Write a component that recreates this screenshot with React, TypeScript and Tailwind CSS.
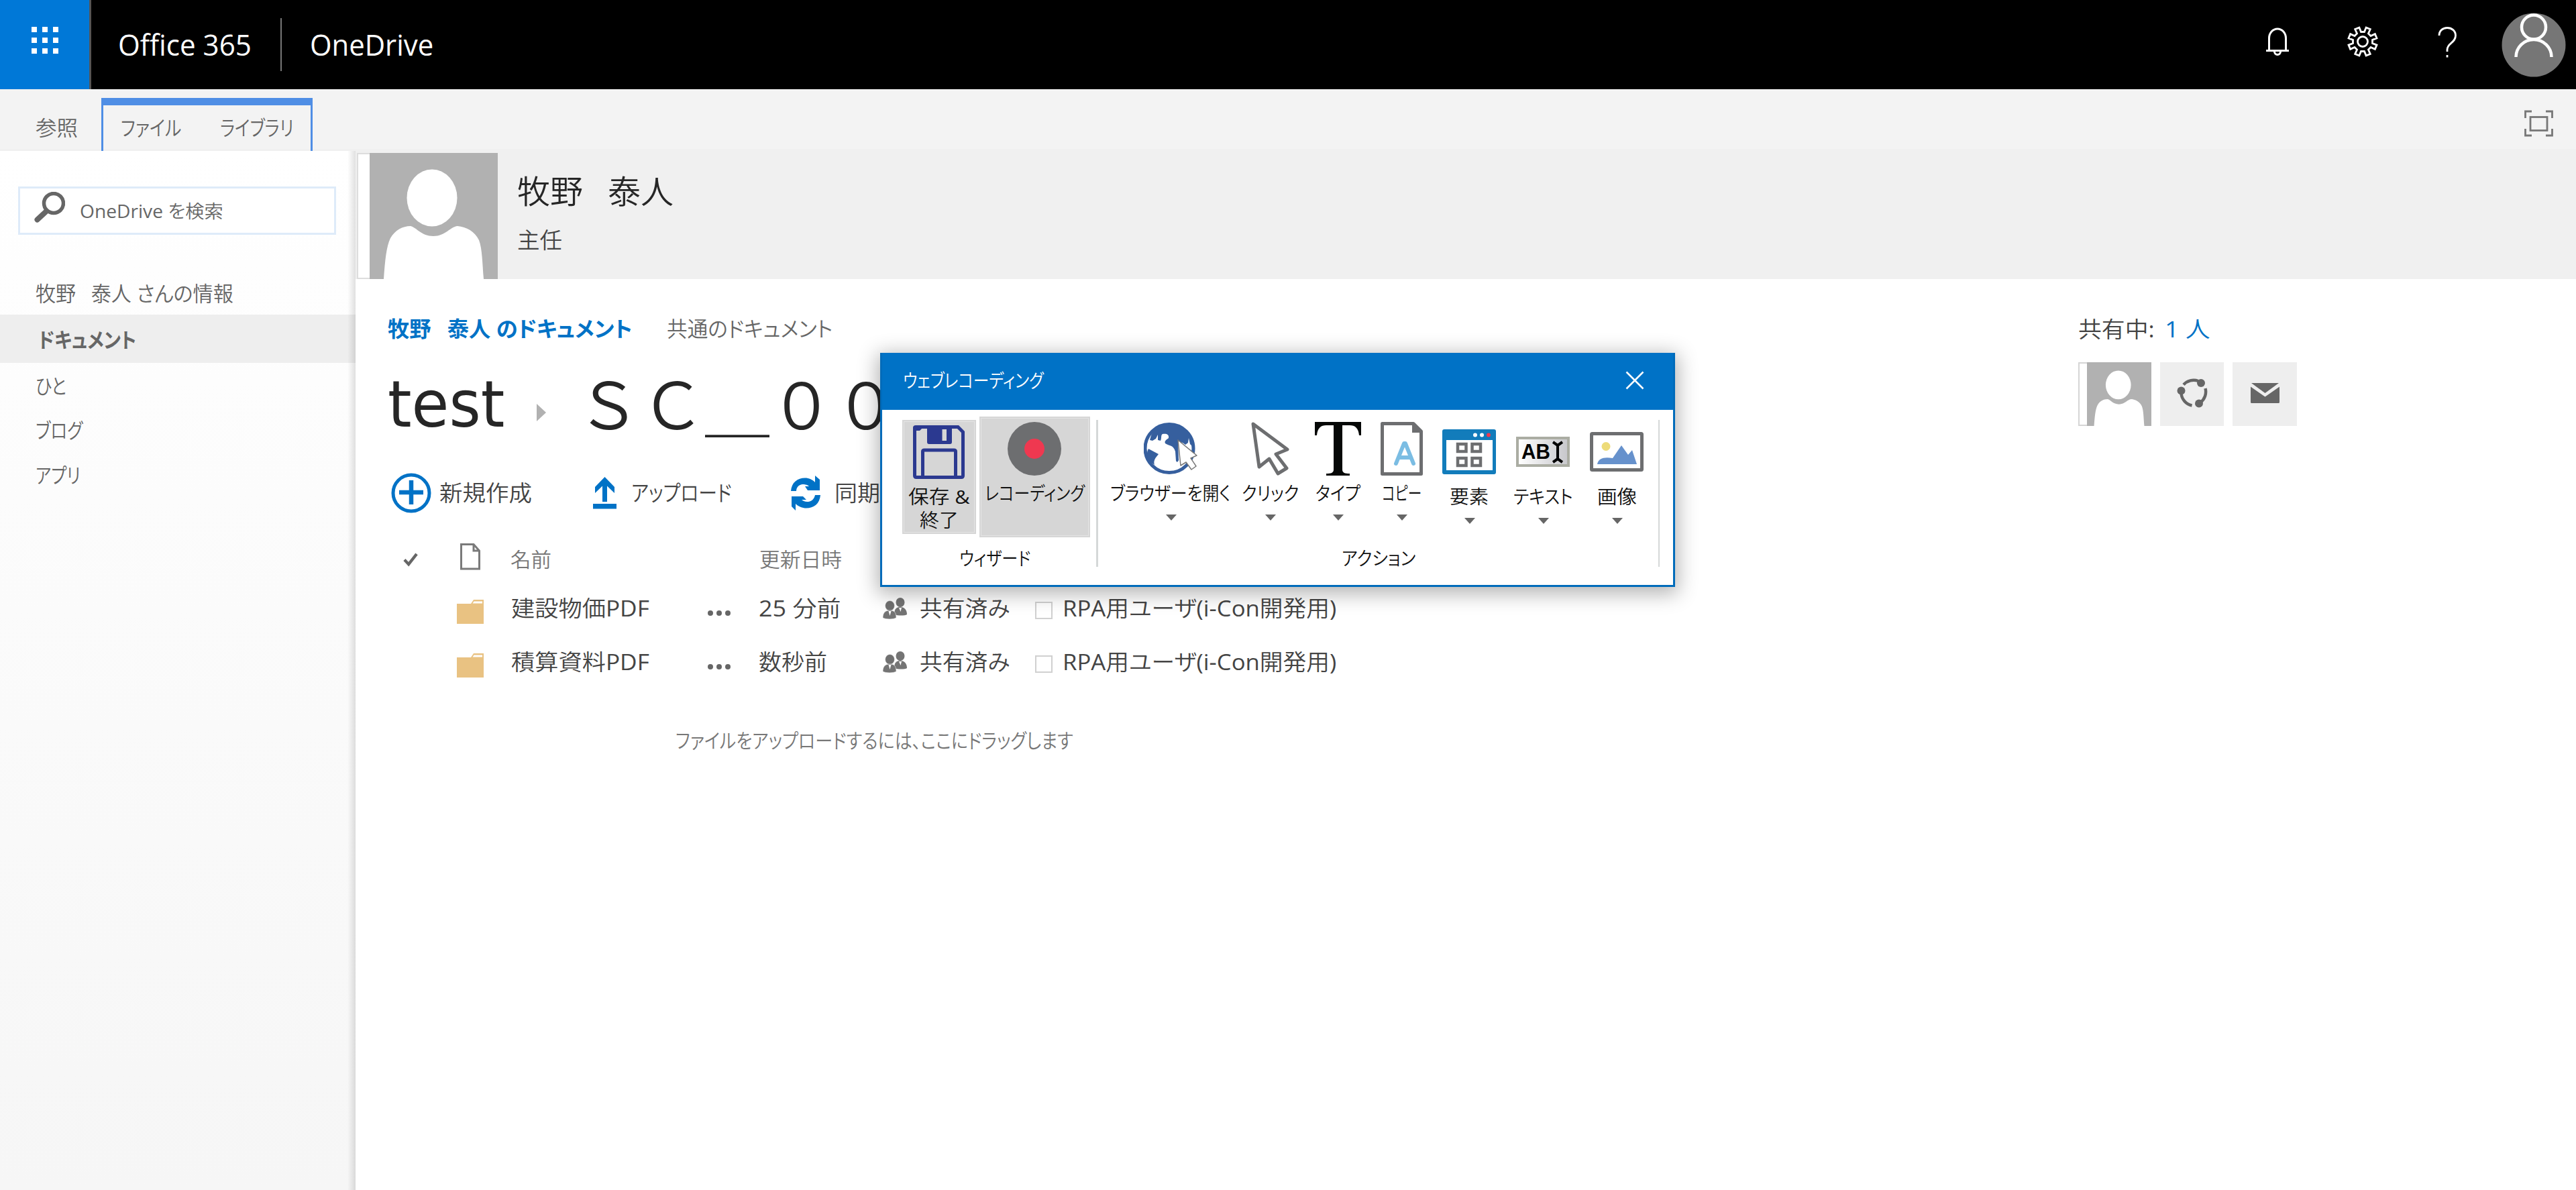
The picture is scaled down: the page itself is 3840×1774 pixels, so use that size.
import { useLayoutEffect, useRef, type ReactNode } from "react";

// Single-line label condensed or expanded to the width of its box.
// Latin runs are set one weight heavier than the Japanese text around them.
function Fit({ className, children }: { className: string; children: ReactNode }) {
  const outer = useRef<HTMLSpanElement>(null);
  const inner = useRef<HTMLSpanElement>(null);
  useLayoutEffect(() => {
    if (!outer.current || !inner.current) return;
    inner.current.style.transform = `scaleX(${outer.current.clientWidth / inner.current.offsetWidth})`;
  }, []);
  const content = typeof children === "string"
    ? children.split(/([!-~]+)/).map((part, i) => (i % 2 ? <span key={i} className="font-normal">{part}</span> : part))
    : children;
  return (
    <span ref={outer} className={`block shrink-0 whitespace-pre leading-none ${className}`}>
      <span ref={inner} className="inline-block origin-left">{content}</span>
    </span>
  );
}

// Owner's name with a tightened ideographic space.
function OwnerName() {
  return <>牧野<span className="tracking-[-0.25em]">　</span>泰人</>;
}

function Portrait({ className }: { className: string }) {
  return (
    <svg viewBox="0 0 191 188" preserveAspectRatio="none" className={className}>
      <rect width="191" height="188" fill="#b1b1b1" />
      <ellipse cx="93" cy="67" rx="37.500" ry="42.500" fill="#fff" />
      <path d="M21 188C23 160 25 139 31 127C38 115 49 109 61 109C70 111 77 124 95 124C113 124 120 110 131 109C144 110 157 117 163 130C168 143 168 165 170 188Z" fill="#fff" />
    </svg>
  );
}

function TopBar() {
  return (
    <header className="flex h-[133px] items-center bg-black text-[43px] text-white">
      <div className="flex h-full w-[136px] items-start justify-center border-r-[3px] border-[#555] bg-[#0078d7] pt-[40px]">
        <div className="grid grid-cols-3 gap-x-[8px] gap-y-[8px]">
          {Array.from({ length: 9 }, (_, i) => <i key={i} className="size-[8px] bg-white" />)}
        </div>
      </div>
      <Fit className="ml-[40px] w-[199px]">Office 365</Fit>
      <div className="ml-[43px] h-[79px] w-[2px] bg-[#777]" />
      <Fit className="ml-[42px] w-[184px]">OneDrive</Fit>
      <div className="ml-auto flex h-full">
        <svg viewBox="0 0 34 42" className="mt-[41px] h-[42px] w-[34px]" fill="none" stroke="#fff" strokeWidth="3">
          <path d="M4.500 34V16a12.500 14 0 0 1 25 0V34M0 34.500H34" />
          <path d="M12.500 36a4.500 4.500 0 0 0 9 0" />
        </svg>
        <svg viewBox="0 0 46 46" className="ml-[87px] mt-[39px] size-[46px]" fill="none" stroke="#fff" strokeWidth="2.800" strokeLinejoin="miter">
          <path d="M20.500 8.500L17.900 2L11.700 4.600L14.500 11L11 14.500L4.600 11.700L2 17.900L8.500 20.500V25.500L2 28.100L4.600 34.300L11 31.500L14.500 35L11.700 41.400L17.900 44L20.500 37.500H25.500L28.100 44L34.300 41.400L31.500 35L35 31.500L41.400 34.300L44 28.100L37.500 25.500V20.500L44 17.900L41.400 11.700L35 14.500L31.500 11L34.300 4.600L28.100 2L25.500 8.500Z" />
          <circle cx="23" cy="23" r="7.500" />
        </svg>
        <svg viewBox="0 0 28 46" className="ml-[89px] mt-[40px] h-[46px] w-[28px]" fill="none" stroke="#fff" strokeWidth="2.800">
          <path d="M2 13C2 6 7 1.500 14 1.500S26.500 6 26.500 13C26.500 24 14 24 14 34V37M14 42V45.500" />
        </svg>
        <svg viewBox="0 0 96 96" className="ml-[67px] mr-[15px] mt-[19px] size-[96px]">
          <circle cx="48" cy="48" r="47.500" fill="#767676" />
          <g fill="none" stroke="#fff" strokeWidth="4.500">
            <circle cx="48" cy="21.500" r="18" />
            <path d="M21.500 66a26.500 26 0 0 1 53 0" />
          </g>
        </svg>
      </div>
    </header>
  );
}

function Ribbon() {
  return (
    <div className="flex h-[92px] items-end border-b-[3px] border-[#f0f0f0] bg-[#f3f3f3] text-[31px] text-[#666]">
      <Fit className="mb-[16px] ml-[53px] w-[63px]">参照</Fit>
      <div className="-mb-[3px] ml-[35px] flex h-[79px] w-[315px] items-end border-x-[3px] border-t-[11px] border-[#4f8ee5] pb-[19px]">
        <Fit className="ml-[26px] w-[90px]">ファイル</Fit>
        <Fit className="ml-[58px] w-[110px]">ライブラリ</Fit>
      </div>
      <svg viewBox="0 0 43 40" className="mb-[18px] ml-auto mr-[34px] h-[40px] w-[43px]" fill="none" stroke="#777" strokeWidth="2.800">
        <path d="M1.500 12V2H11M32 2H41.500V12M41.500 28V38H32M11 38H1.500V28" />
        <rect x="9" y="10.500" width="25" height="20" />
      </svg>
    </div>
  );
}

function Sidebar() {
  return (
    <aside className="relative w-[530px] shrink-0 bg-linear-to-b from-white to-[#f6f6f6] text-[31px] text-[#666]">
      <div className="ml-[27px] mt-[53px] flex h-[72px] w-[474px] items-center border-[3px] border-[#deebf9] bg-white text-[27px]">
        <svg viewBox="0 0 46 46" className="-mt-[10px] ml-[21px] size-[46px]" fill="none" stroke="#666" strokeLinecap="round">
          <circle cx="29" cy="17" r="14.500" strokeWidth="5.500" />
          <path d="M18 29L4.500 41.500" strokeWidth="8" />
        </svg>
        <Fit className="ml-[22px] w-[214px]">OneDrive を検索</Fit>
      </div>
      <nav className="mt-[55px]">
        <div className="flex h-[64px] items-center pl-[53px]"><Fit className="w-[295px]"><OwnerName /> さんの情報</Fit></div>
        <div className="flex h-[72px] items-center bg-[#eee] pl-[57px] pt-[2px] font-bold"><Fit className="w-[146px]">ドキュメント</Fit></div>
        <div className="flex h-[68px] items-center pl-[53px]"><Fit className="w-[46px]">ひと</Fit></div>
        <div className="flex h-[64px] items-center pl-[53px]"><Fit className="w-[70px]">ブログ</Fit></div>
        <div className="flex h-[70px] items-center pl-[53px]"><Fit className="w-[67px]">アプリ</Fit></div>
      </nav>
      <div className="absolute inset-y-0 right-0 w-[12px] bg-linear-to-r from-transparent to-black/12" />
    </aside>
  );
}

function Profile() {
  return (
    <div className="flex h-[191px] bg-[#f0f0f0] pl-[2px] pt-[3px]">
      <div className="w-[19px] border-2 border-r-0 border-[#ddd] bg-white" />
      <Portrait className="h-[188px] w-[191px]" />
      <div className="ml-[29px]">
        <Fit className="mt-[33px] w-[233px] text-[48px] text-[#262626]"><OwnerName /></Fit>
        <Fit className="mt-[32px] w-[67px] text-[33px] text-[#444]">主任</Fit>
      </div>
    </div>
  );
}

function People() {
  return (
    <svg viewBox="0 0 36 32" className="h-[32px] w-[36px]" fill="#747474">
      <ellipse cx="26" cy="7" rx="6.500" ry="7" />
      <path d="M17 25C17 16 21 14 26 14S36 17 36 25C33 27 22 27 17 25Z" />
      <ellipse cx="10.500" cy="12" rx="7" ry="7.500" fill="#707070" stroke="#fff" strokeWidth=".5" />
      <path d="M0 30C0 22 4 19 10.500 19S20 22 20 30C16 32.500 4 32.500 0 30Z" stroke="#fff" strokeWidth=".5" />
      <path d="M8.500 20H12.500L10.500 27ZM24 15H28L26.500 21Z" fill="#fff" />
    </svg>
  );
}

function FileRow({ name, time, timeWidth }: { name: string; time: string; timeWidth: string }) {
  return (
    <div className="flex h-[80px] items-center text-[33px] text-[#444]">
      <svg viewBox="0 0 40 36" className="ml-[103px] mt-[9px] h-[36px] w-[40px]">
        <path d="M0 6H21L25 0H40V36H0Z" fill="#e9c282" />
        <path d="M25.500 2.500H38V5.500H23.500Z" fill="#fff" />
      </svg>
      <Fit className="-mt-[2px] ml-[41px] w-[206px]">{name}</Fit>
      <svg viewBox="0 0 36 10" className="ml-[86px] mt-[14px] h-[10px] w-[36px]" fill="#666">
        <circle cx="5" cy="5" r="4" /><circle cx="18" cy="5" r="4" /><circle cx="31" cy="5" r="4" />
      </svg>
      <div className="-mt-[2px] ml-[41px] w-[185px]"><Fit className={timeWidth}>{time}</Fit></div>
      <People />
      <Fit className="-mt-[2px] ml-[19px] w-[134px]">共有済み</Fit>
      <div className="ml-[38px] mt-[6px] size-[26px] border-2 border-[#d0d0d0]" />
      <Fit className="-mt-[2px] ml-[15px] w-[408px]">RPA用ユーザ(i-Con開発用)</Fit>
    </div>
  );
}

function Documents() {
  return (
    <section className="w-[2520px] pl-[48px]">
      <div className="flex h-[148px] items-center text-[32px] text-[#666]">
        <Fit className="w-[364px] font-bold text-[#0072c6]"><OwnerName /> のドキュメント</Fit>
        <Fit className="ml-[52px] w-[247px]">共通のドキュメント</Fit>
      </div>
      <div className="flex h-[74px] items-center text-[96px] text-[#262626]">
        <Fit className="mt-[3px] w-[174px] font-[DejaVu_Sans] text-[97px]">test</Fit>
        <div className="ml-[48px] mt-[28px] border-y-[13px] border-l-[14px] border-y-transparent border-l-[#b1b1b1]" />
        <span className="-mt-[5px] ml-[45px] font-['Noto_Sans_CJK_JP'] leading-none [font-feature-settings:normal]">ＳＣ＿００</span>
      </div>
      <div className="mt-[67px] flex h-[60px] items-center text-[33px] text-[#444]">
        <svg viewBox="0 0 60 60" className="ml-[5px] size-[60px]" fill="none" stroke="#0072c6">
          <circle cx="30" cy="30" r="27" strokeWidth="5" />
          <path d="M30 11V47M12 29H48" strokeWidth="6.500" />
        </svg>
        <Fit className="-mt-[2px] ml-[12px] w-[138px]">新規作成</Fit>
        <svg viewBox="0 0 35 48" className="ml-[91px] h-[48px] w-[35px]" fill="#0072c6">
          <path d="M17.500 0L32 15V24L21 13.500V37H14V13.500L3 24V15Z" /><path d="M0 40H35V47.500H0Z" />
        </svg>
        <Fit className="-mt-[2px] ml-[22px] w-[150px]">アップロード</Fit>
        <svg viewBox="0 0 44 52" className="ml-[88px] h-[52px] w-[44px]" fill="#0072c6">
          <path d="M0 23C1 10 10 3.500 21 3.500C27 3.500 32 6 36 10V0L43 6V22H25L21 16H27C24 13 20 13 17 13C11 14 8 18 8 23Z" />
          <path d="M44 29C43 42 34 48.500 23 48.500C17 48.500 11 46 7 42V52L1 46V31H18L23 36H16C20 39 23 39 26 39C32 38 35 34 36 29Z" />
        </svg>
        <Fit className="-mt-[2px] ml-[21px] w-[68px]">同期</Fit>
      </div>
      <div className="mt-[39px] flex h-[60px] items-center text-[30px] text-[#777]">
        <svg viewBox="0 0 23 22" className="ml-[23px] h-[21px] w-[22px]" fill="none" stroke="#666" strokeWidth="4.500"><path d="M2 11L8.500 18L21 2" /></svg>
        <svg viewBox="0 0 30 40" className="-mt-[8px] ml-[63px] h-[40px] w-[30px]" fill="none" stroke="#7a7a7a" strokeWidth="3">
          <path d="M1.500 1.500H20L28.500 11V38H1.500ZM20 2V11H28" />
        </svg>
        <Fit className="ml-[45px] w-[61px]">名前</Fit>
        <Fit className="ml-[310px] w-[123px]">更新日時</Fit>
      </div>
      <div className="mt-[3px]">
        <FileRow name="建設物価PDF" time="25 分前" timeWidth="w-[122px]" />
        <FileRow name="積算資料PDF" time="数秒前" timeWidth="w-[102px]" />
      </div>
      <div className="mt-[57px] flex h-[40px] items-center pl-[429px] text-[30px] text-[#777]">
        <Fit className="w-[593px]">ファイルをアップロードするには、ここにドラッグします</Fit>
      </div>
    </section>
  );
}

function Sharing() {
  return (
    <section className="ml-[48px] pt-[54px] text-[33px]">
      <div className="flex h-[40px] items-center">
        <Fit className="w-[114px] text-[#444]">共有中:</Fit>
        <Fit className="ml-[15px] w-[67px] text-[#0072c6]">1 人</Fit>
      </div>
      <div className="mt-[30px] flex h-[95px] gap-[13px]">
        <div className="flex w-[109px]">
          <div className="w-[13px] border-2 border-r-0 border-[#d5d5d5] bg-white" />
          <Portrait className="h-[95px] w-[96px]" />
        </div>
        <div className="grid w-[95px] place-items-center bg-[#eee]">
          <svg viewBox="0 0 46 44" className="-mt-[4px] h-[44px] w-[46px]" fill="none" stroke="#666" strokeWidth="4.500">
            <path d="M10 9.500A20 20 0 0 1 32 4M42.500 15A20 20 0 0 1 35 36M22.500 40.500A20 20 0 0 1 6.500 22" />
            <g fill="#666" stroke="none"><circle cx="36" cy="7" r="6" /><circle cx="6.500" cy="18.500" r="6" /><circle cx="33" cy="37.500" r="6" /></g>
          </svg>
        </div>
        <div className="grid w-[96px] place-items-center bg-[#eee]">
          <svg viewBox="0 0 43 30" className="-mt-[3px] h-[30px] w-[43px]" fill="#666">
            <path d="M1 0H42L21.500 15Z" /><path d="M0 5.500L21.500 20.500L43 5.500V28.500Q43 30 41.500 30H1.500Q0 30 0 28.500Z" />
          </svg>
        </div>
      </div>
    </section>
  );
}

function Action({ className, icon, label, labelClass }: { className: string; icon: ReactNode; label: string; labelClass: string }) {
  return (
    <div className={`flex flex-col items-center ${className}`}>
      {icon}
      <Fit className={labelClass}>{label}</Fit>
      <div className="ml-[1px] mt-[18px] border-x-[8px] border-t-[9px] border-x-transparent border-t-[#666]" />
    </div>
  );
}

function FloppyIcon() {
  return (
    <svg viewBox="0 0 77 80" className="mr-[2px] h-[80px] w-[77px]">
      <path d="M2.500 3.500Q2.500 2.500 4 2.500H67L74.500 10V75Q74.500 77.500 72 77.500H5Q2.500 77.500 2.500 75Z" fill="none" stroke="#2b3990" strokeWidth="5" />
      <path d="M21 0H58V25Q58 28 55 28H24Q21 28 21 25ZM2 3H15L10 8H2Z" fill="#2b3990" />
      <path d="M43.500 6H50V23H43.500Z" fill="#d6d6d6" />
      <path d="M14.500 77V39Q14.500 37 17 37H61Q63.500 37 63.500 39V77" fill="none" stroke="#2b3990" strokeWidth="5" />
    </svg>
  );
}

function Recorder() {
  return (
    <div className="absolute left-[1312px] top-[526px] h-[349px] w-[1185px] border-[3px] border-t-0 border-[#006bba] bg-white text-[28px] text-[#111] shadow-[0_6px_28px_4px_rgba(0,0,0,0.3)]">
      <div className="flex h-[85px] items-center bg-[#0072c6] text-white">
        <Fit className="-mt-[4px] ml-[31px] w-[210px]">ウェブレコーディング</Fit>
        <svg viewBox="0 0 28 28" className="-mt-[3px] ml-auto mr-[43px] size-[28px]" stroke="#fff" strokeWidth="2.500"><path d="M1.500 1.500L26.500 26.500M26.500 1.500L1.500 26.500" /></svg>
      </div>
      <div className="flex h-[234px]">
        <div className="w-[319px]">
          <div className="flex h-[203px] items-start gap-[5px] pl-[30px] pt-[10px]">
            <div className="mt-[5px] flex h-[170px] w-[110px] flex-col items-center border-[2px] border-[#d6d6d6] bg-[#d6d6d6] pt-[6px] outline-1 -outline-offset-3 outline-[#e4e4e4]">
              <FloppyIcon />
              <Fit className="mt-[12px] w-[92px]">保存 &amp;</Fit>
              <Fit className="mt-[7px] w-[58px]">終了</Fit>
            </div>
            <div className="flex h-[180px] w-[165px] flex-col items-center bg-[#d6d6d6] pt-[8px] outline-1 -outline-offset-3 outline-[#e4e4e4]">
              <div className="mr-[1px] grid size-[80px] place-items-center rounded-full bg-[#6d6e70]"><div className="size-[30px] rounded-full bg-[#ef3850]" /></div>
              <Fit className="mr-[1px] mt-[12px] w-[149px]">レコーディング</Fit>
            </div>
          </div>
          <Fit className="ml-[115px] mt-[4px] w-[106px]">ウィザード</Fit>
        </div>
        <div className="mt-[15px] h-[219px] w-[3px] bg-[#d5d8d8]" />
        <div className="w-[835px]">
          <div className="flex h-[203px] pl-[19px] pt-[18px]">
            <Action className="w-[178px]" label="ブラウザーを開く" labelClass="mt-[12px] w-[180px]" icon={
              <svg viewBox="0 0 80 80" className="h-[80px] w-[80px] shrink-0">
                <circle cx="38" cy="39.500" r="36" fill="#fff" stroke="#365f9e" strokeWidth="5" />
                <path d="M9 27L11 20C17 7 27 2 38 2C55 2 69 13 74 30L73 37L69 33L67 24L66 31L62 34L58 31L51 30L52 57Q50 62 48 58L47 44C44 34 38 36 32 32C30 28 35 26 37 24C38 18 33 17 28 18C25 20 27 24 25 28L21 27L21 19L18 25L13 28ZM7 40L22 48C17 54 14 58 16 64C6 58 2 49 7 40Z" fill="#365f9e" />
                <path d="M51 27L79 50L70 54L78 66L71 71L63 60L55 65Z" fill="#fff" stroke="#777" strokeWidth="1.500" strokeLinejoin="round" />
              </svg>} />
            <Action className="ml-[17px] w-[85px]" label="クリック" labelClass="mt-[12px] w-[85px]" icon={
              <svg viewBox="0 0 58 80" className="h-[80px] w-[58px] shrink-0" fill="#fff" stroke="#6d6e70" strokeWidth="5" strokeLinejoin="round">
                <path d="M3 3L54 41L37 48L53 69L40 77L27 55L12 67Z" />
              </svg>} />
            <Action className="ml-[24px] w-[69px]" label="タイプ" labelClass="mt-[12px] w-[67px]" icon={
              <svg viewBox="0 0 69 80" className="h-[80px] w-[69px] shrink-0" fill="#060807">
                <path d="M0 0H69V20H66C65 9 60 5 52 5H41V71C41 76 45 77 52 77V80H17V77C24 77 28 76 28 71V5H17C9 5 4 9 3 20H0Z" />
              </svg>} />
            <Action className="ml-[29px] w-[63px]" label="コピー" labelClass="mt-[12px] w-[59px]" icon={
              <svg viewBox="0 0 63 80" className="h-[80px] w-[63px] shrink-0" fill="none">
                <path d="M2.500 2.500H49L60.500 14V77.500H2.500Z" stroke="#6d6e70" strokeWidth="5" strokeLinejoin="round" />
                <path d="M47 2H50L62 14V16H47Z" fill="#6d6e70" />
                <path d="M23 62L35 32H37L49 62M28 53H44" stroke="#7bbde3" strokeWidth="6" strokeLinecap="round" strokeLinejoin="round" />
              </svg>} />
            <Action className="ml-[29px] w-[80px]" label="要素" labelClass="mt-[17px] w-[58px]" icon={
              <svg viewBox="0 0 80 80" className="size-[80px] shrink-0">
                <rect y="11" width="80" height="67" rx="3" fill="#127cbb" />
                <path d="M6 27H75V72H6Z" fill="#fff" />
                <circle cx="49" cy="19.500" r="3" fill="#fff" /><circle cx="59" cy="19.500" r="3" fill="#fff" /><circle cx="69" cy="19.500" r="3" fill="#ef3850" />
                <path d="M23 33H35.500V44H23ZM44.500 33H57V44H44.500ZM23 54H35.500V65H23ZM44.500 54H57V65H44.500Z" fill="none" stroke="#6d6e70" strokeWidth="4.500" />
              </svg>} />
            <Action className="ml-[26px] w-[88px]" label="テキスト" labelClass="mt-[17px] w-[89px]" icon={
              <div className="mt-[22px] mb-[13px] flex h-[45px] w-[80px] shrink-0 items-center border-4 border-[#abada3] bg-linear-to-r from-white to-[#c8c8cc] pl-[4px] font-[Liberation_Sans] text-[31px] text-black">
                <Fit className="w-[43px]"><b>AB</b></Fit>
                <svg viewBox="0 0 16 34" className="ml-[3px] h-[34px] w-[16px]" fill="none" stroke="#000" strokeWidth="4"><path d="M1 2L8 7L15 2M8 6V28M1 32L8 27L15 32" /></svg>
              </div>} />
            <Action className="ml-[26px] w-[80px]" label="画像" labelClass="mt-[17px] w-[59px]" icon={
              <svg viewBox="0 0 80 80" className="size-[80px] shrink-0">
                <rect x="2.500" y="17.500" width="75" height="54" rx="1" fill="#fff" stroke="#6d6e70" strokeWidth="5" />
                <circle cx="24" cy="36.500" r="6.500" fill="#eddb79" />
                <path d="M11 63C13 54 21 52 34 54L47 35L57 49L63 42L70 63Z" fill="#6691cc" />
              </svg>} />
          </div>
          <Fit className="ml-[363px] mt-[4px] w-[110px]">アクション</Fit>
        </div>
        <div className="mt-[15px] h-[219px] w-[2px] bg-[#d5d8d8]" />
      </div>
    </div>
  );
}

export default function App() {
  return (
    <div className="relative flex h-[1774px] w-[3840px] flex-col overflow-hidden bg-white font-['Open_Sans','Noto_Sans_CJK_JP',sans-serif] font-[350] [font-feature-settings:'palt']">
      <TopBar />
      <Ribbon />
      <div className="flex min-h-0 flex-1">
        <Sidebar />
        <main className="flex-1">
          <Profile />
          <div className="flex">
            <Documents />
            <Sharing />
          </div>
        </main>
      </div>
      <Recorder />
    </div>
  );
}
